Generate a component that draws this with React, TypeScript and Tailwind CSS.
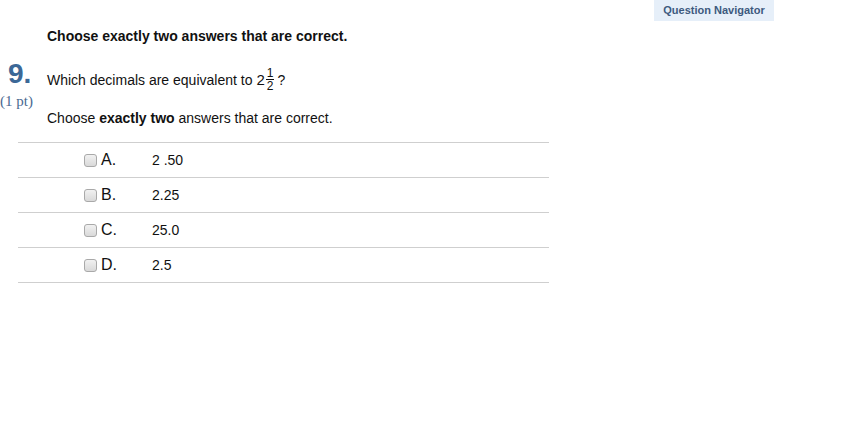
const options = [
  { key: 'A.', value: '2 .50' },
  { key: 'B.', value: '2.25' },
  { key: 'C.', value: '25.0' },
  { key: 'D.', value: '2.5' },
]

function Checkbox() {
  return (
    <span className="block w-[13px] h-[13px] rounded-[3px] border border-[#a9a9a9] bg-gradient-to-b from-[#f1f1f1] to-[#d9d9d9]" />
  )
}

export default function App() {
  return (
    <div className="w-[841px] h-[423px] bg-white text-[#111] font-['Liberation_Sans',Arial,sans-serif] flex overflow-hidden">
      {/* Question */}
      <div className="w-[549px] shrink-0">
        <div className="pt-[28px] pl-[47px] text-[14px] leading-[16px] font-bold">
          Choose exactly two answers that are correct.
        </div>

        <div className="flex mt-[16px]">
          <div className="w-[47px] shrink-0 flex flex-col">
            <div className="pl-[8px] text-[28px] leading-[27px] font-bold text-[#3c6897]">9.</div>
            <div className="mt-[6px] text-[15px] leading-[16px] text-[#4a6a92] font-['Liberation_Serif','Times_New_Roman',serif]">
              (1 pt)
            </div>
          </div>
          <div className="flex-1">
            <div className="mt-[8px] flex items-center text-[14px] leading-[16px]">
              <span>Which decimals are equivalent to</span>
              <span className="ml-[4px] text-[15px]">2</span>
              <span className="inline-flex flex-col items-center text-[12px] leading-[10px] ml-[1px]">
                <span className="px-[1px] border-b border-[#111] pb-[1px]">1</span>
                <span className="pt-[1px]">2</span>
              </span>
              <span className="ml-[3px]">?</span>
            </div>
            <div className="mt-[19px] text-[14px] leading-[16px]">
              Choose <b>exactly two</b> answers that are correct.
            </div>
          </div>
        </div>

        <div className="ml-[18px] mt-[16px] border-b border-[#cfcfcf]">
          {options.map(({ key, value }) => (
            <div key={key} className="h-[35px] border-t border-[#cfcfcf] flex items-center text-[14px] leading-[16px]">
              <div className="ml-[66px] w-[17px]"><Checkbox /></div>
              <div className="w-[51px] text-[16px]">{key}</div>
              <div>{value}</div>
            </div>
          ))}
        </div>
      </div>

      {/* Navigator */}
      <div className="ml-[105px] w-[120px] h-[21px] bg-[#e6eff9] flex items-center justify-center text-[11px] font-bold text-[#3d5a7e]">
        Question Navigator
      </div>
    </div>
  )
}
